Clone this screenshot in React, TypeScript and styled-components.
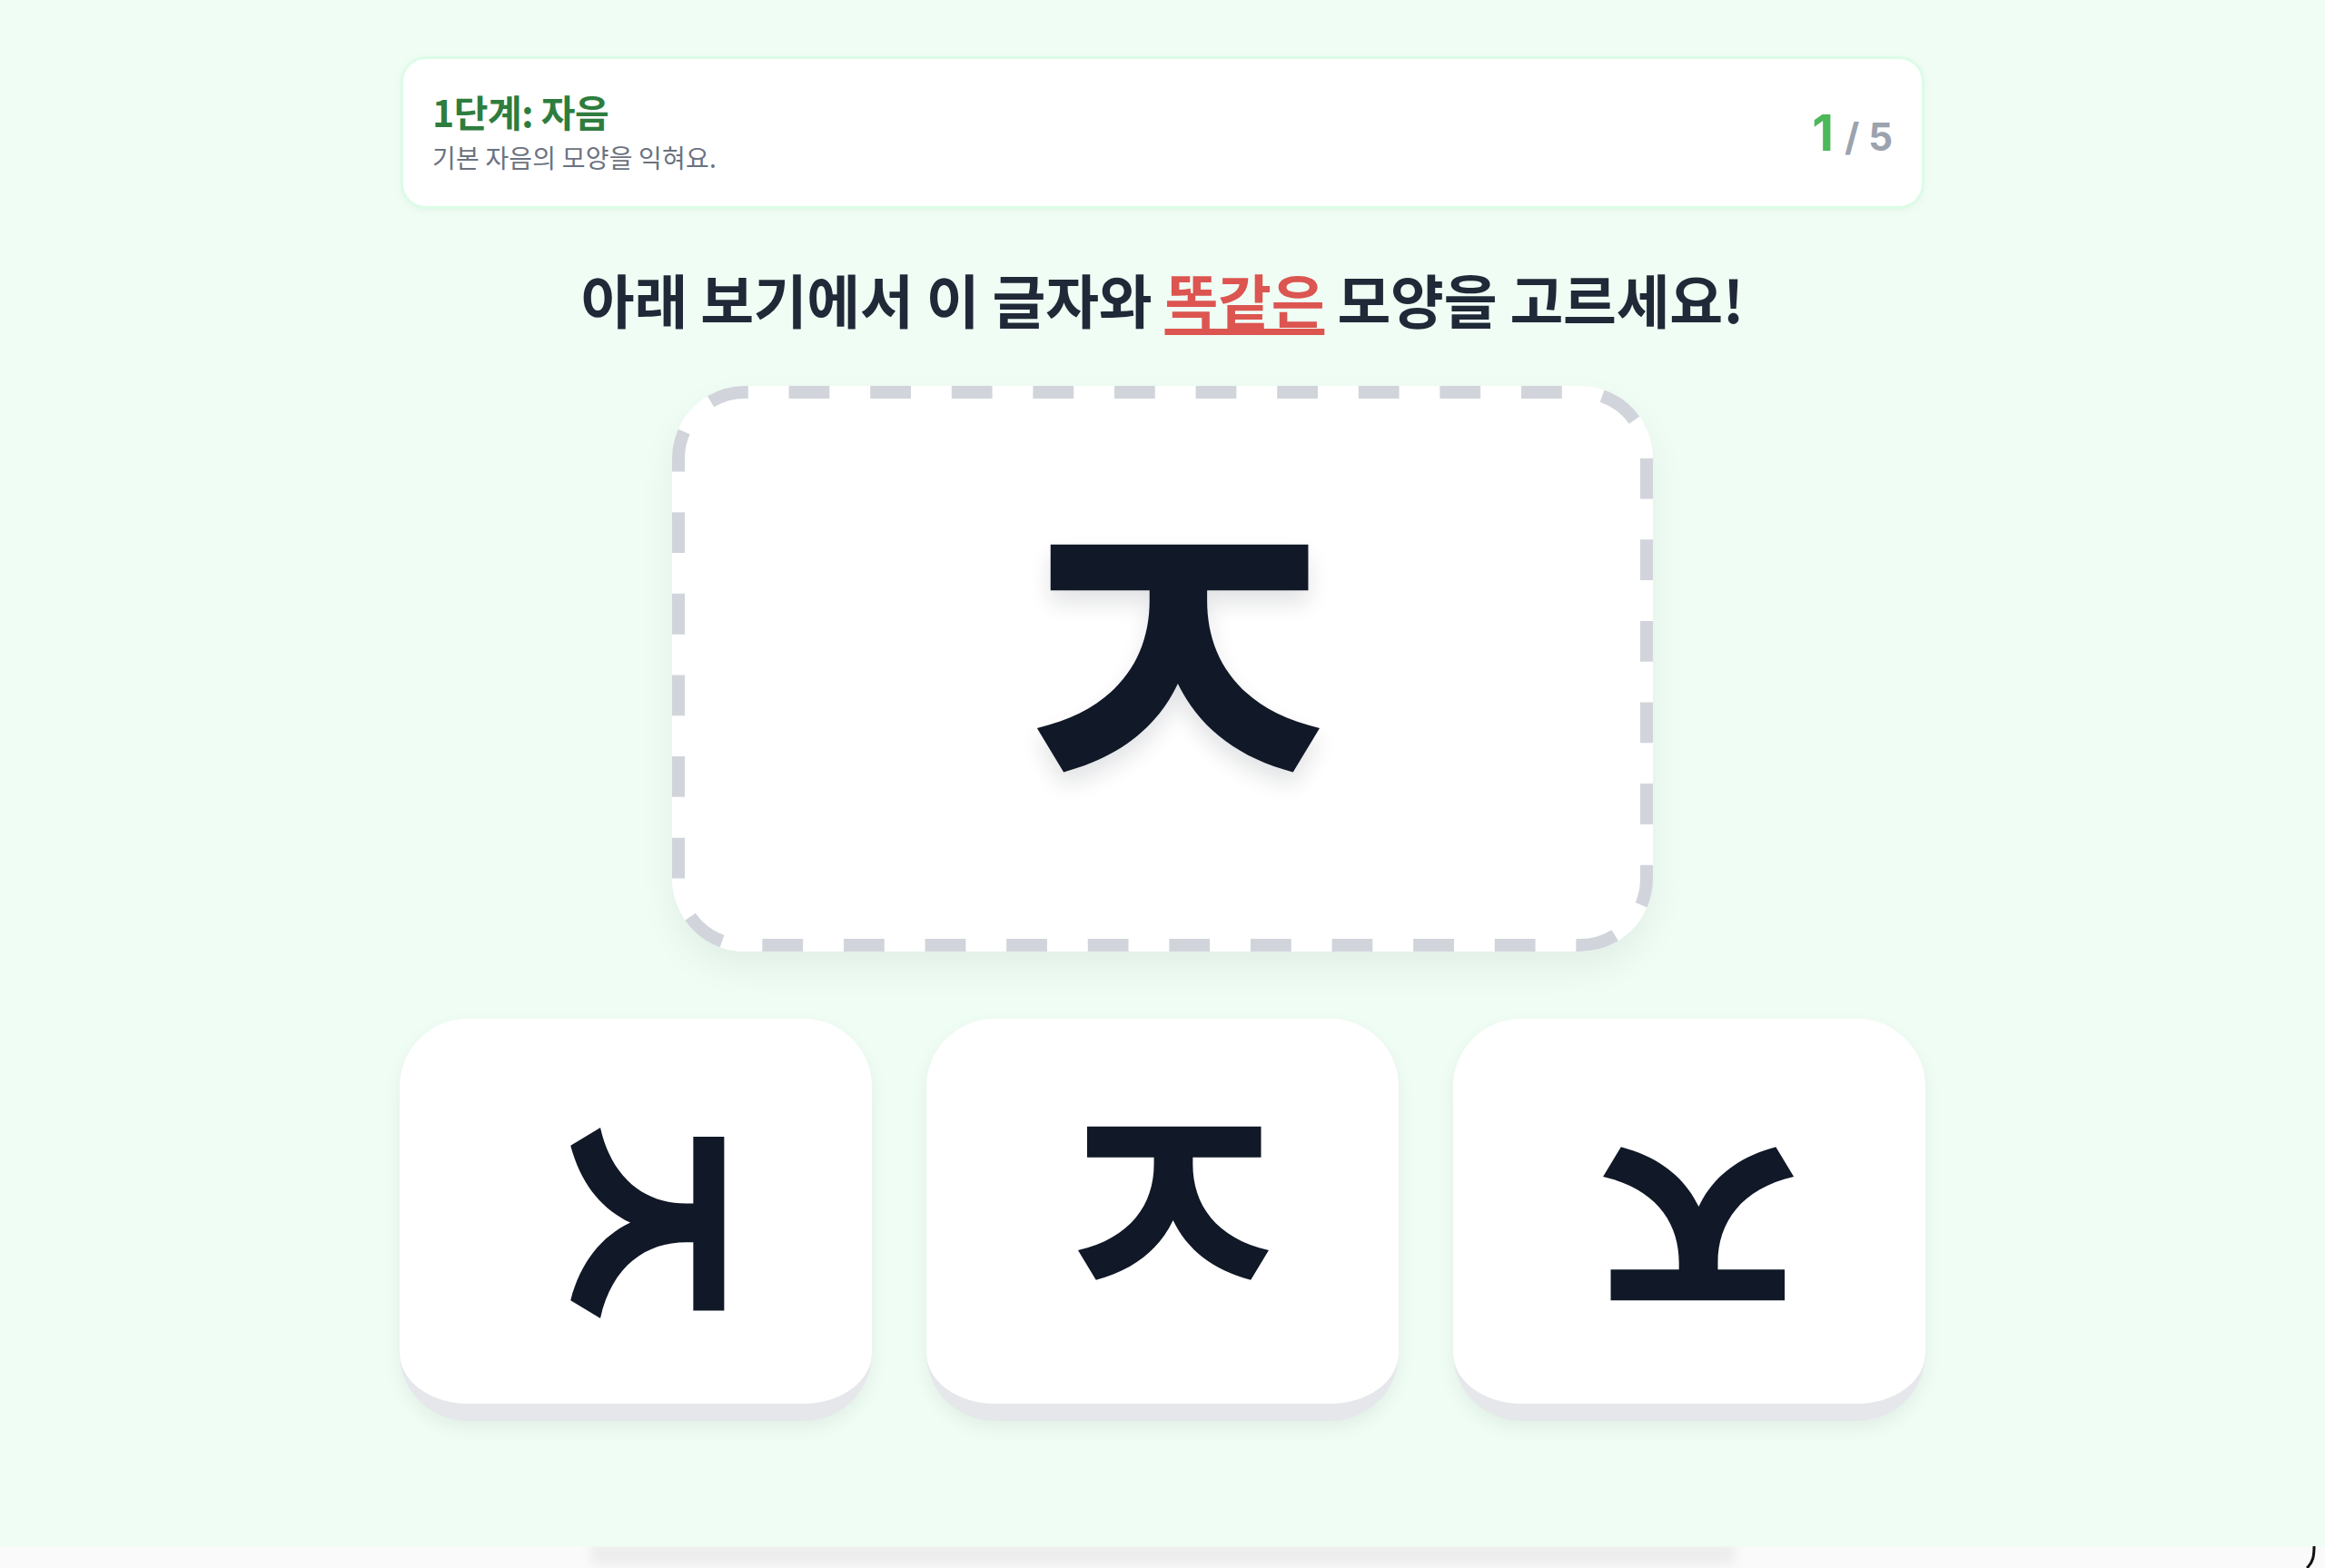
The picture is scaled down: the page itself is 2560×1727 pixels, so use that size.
import styled, { createGlobalStyle } from 'styled-components';

const GlobalStyle = createGlobalStyle`
	html, body {
		margin: 0;
		padding: 0;
		background: #fbfafa;
	}
	* {
		box-sizing: border-box;
	}
`;

const options = [
	{ id: 1, turn: 90, dx: -7, dy: 12 },
	{ id: 2, turn: 0, dx: 0, dy: 0 },
	{ id: 3, turn: 180, dx: 0, dy: 5 },
];

const App = () => {
	return (
		<>
			<GlobalStyle />
			<SPage>
				<div className='container'>
					<SHeader>
						<div className='header__text'>
							<h1>1단계: 자음</h1>
							<p>기본 자음의 모양을 익혀요.</p>
						</div>
						<div className='header__count'>
							<span className='current'>1</span>
							<span className='total'>/ 5</span>
						</div>
					</SHeader>

					<SQuestion>
						아래 보기에서 이 글자와 <em>똑같은</em> 모양을 고르세요!
					</SQuestion>

					<STarget>
						{/* dashed outline drawn on top of the card */}
						<svg className='target__outline' width='1080' height='623' viewBox='0 0 1080 623'>
							<rect
								x='7'
								y='7'
								width='1066'
								height='609'
								rx='73'
								ry='73'
								fill='none'
								stroke='#d1d5db'
								strokeWidth='14'
								strokeDasharray='44.8 44.8'
								strokeDashoffset='41'
							/>
						</svg>
						<span className='target__glyph'>ㅈ</span>
					</STarget>

					<SChoices>
						{options.map((o) => (
							<SChoice key={o.id} type='button'>
								<SChoiceGlyph $turn={o.turn} $dx={o.dx} $dy={o.dy}>
									ㅈ
								</SChoiceGlyph>
							</SChoice>
						))}
					</SChoices>
				</div>
			</SPage>
			<SBottom>
				<div className='bottom__shadow' />
				<svg className='bottom__curve' width='14' height='24' viewBox='0 0 14 24'>
					<path d='M10 0 C 10 10, 9 18, 2 24' fill='none' stroke='#111' strokeWidth='3' />
				</svg>
			</SBottom>
		</>
	);
};

export default App;

const SPage = styled.div`
	min-height: 1703px;
	background-color: #f0fdf4;
	padding: 62px 0 136px;
	font-family: 'Noto Sans CJK KR', 'Noto Sans', sans-serif;

	.container {
		width: 1680px;
		margin: 0 auto;
	}
`;

const SHeader = styled.div`
	height: 168px;
	margin: 0 1px;
	padding: 0 32px;
	display: flex;
	justify-content: space-between;
	align-items: center;
	background: #ffffff;
	border: 3px solid #dcfce7;
	border-radius: 28px;
	box-shadow: 0 2px 8px rgba(22, 101, 52, 0.05);

	.header__text {
		display: flex;
		flex-direction: column;
		gap: 8px;
		margin-top: -2px;

		h1 {
			margin: 0;
			font-size: 41px;
			font-weight: 700;
			line-height: 1.2;
			letter-spacing: -0.5px;
			color: #2e7d3e;
		}

		p {
			margin: 0;
			font-size: 28px;
			font-weight: 400;
			line-height: 1.3;
			letter-spacing: 0.2px;
			color: #6b7280;
		}
	}

	.header__count {
		display: flex;
		align-items: baseline;
		gap: 12px;
		font-family: Inter, 'Liberation Sans', sans-serif;
		font-weight: 700;

		.current {
			font-size: 55px;
			color: #4cb85a;
		}

		.total {
			font-size: 42px;
			color: #9ca3af;
		}
	}
`;

const SQuestion = styled.h2`
	margin: 57px 0 0;
	text-align: center;
	font-size: 64px;
	font-weight: 700;
	line-height: 83px;
	letter-spacing: -0.3px;
	color: #1f2937;

	em {
		font-style: normal;
		color: #dc5550;
		text-decoration: underline;
		text-decoration-thickness: 7px;
		text-underline-offset: 6px;
		text-decoration-color: #dc5550;
	}
`;

const STarget = styled.div`
	position: relative;
	width: 1080px;
	height: 623px;
	margin: 55px auto 0;
	display: flex;
	justify-content: center;
	align-items: center;
	background: #ffffff;
	border-radius: 80px;
	box-shadow: 0 18px 40px rgba(17, 24, 39, 0.06);

	.target__outline {
		position: absolute;
		inset: 0;
		pointer-events: none;
	}

	.target__glyph {
		padding: 0 0 78px 32px;
		font-size: 480px;
		font-weight: 700;
		line-height: 1;
		color: #111827;
		text-shadow: 0 14px 24px rgba(17, 24, 39, 0.12);
	}
`;

const SChoices = styled.div`
	margin-top: 74px;
	display: grid;
	grid-template-columns: repeat(3, 520px);
	gap: 60px;
`;

const SChoice = styled.button`
	height: 443px;
	padding: 0 0 0 22px;
	display: flex;
	justify-content: center;
	align-items: center;
	background: #ffffff;
	border: none;
	border-bottom: 19px solid #e5e7eb;
	border-radius: 75px;
	box-shadow: 0 8px 20px rgba(17, 24, 39, 0.06);
	cursor: pointer;
	font-family: 'Noto Sans CJK KR', 'Noto Sans', sans-serif;
`;

const SChoiceGlyph = styled.span<{ $turn: number; $dx: number; $dy: number }>`
	display: inline-block;
	padding-bottom: 54px;
	font-size: 324px;
	font-weight: 700;
	line-height: 1;
	color: #111827;
	transform: translate(${(p) => p.$dx}px, ${(p) => p.$dy}px) rotate(${(p) => p.$turn}deg);
`;

const SBottom = styled.div`
	position: relative;
	height: 24px;
	background: #fbfafa;
	overflow: hidden;

	.bottom__shadow {
		width: 1260px;
		height: 24px;
		margin: 0 auto;
		background: linear-gradient(180deg, rgba(0, 0, 0, 0.08), rgba(0, 0, 0, 0.02));
		filter: blur(6px);
	}

	.bottom__curve {
		position: absolute;
		right: 8px;
		top: 0;
	}
`;
